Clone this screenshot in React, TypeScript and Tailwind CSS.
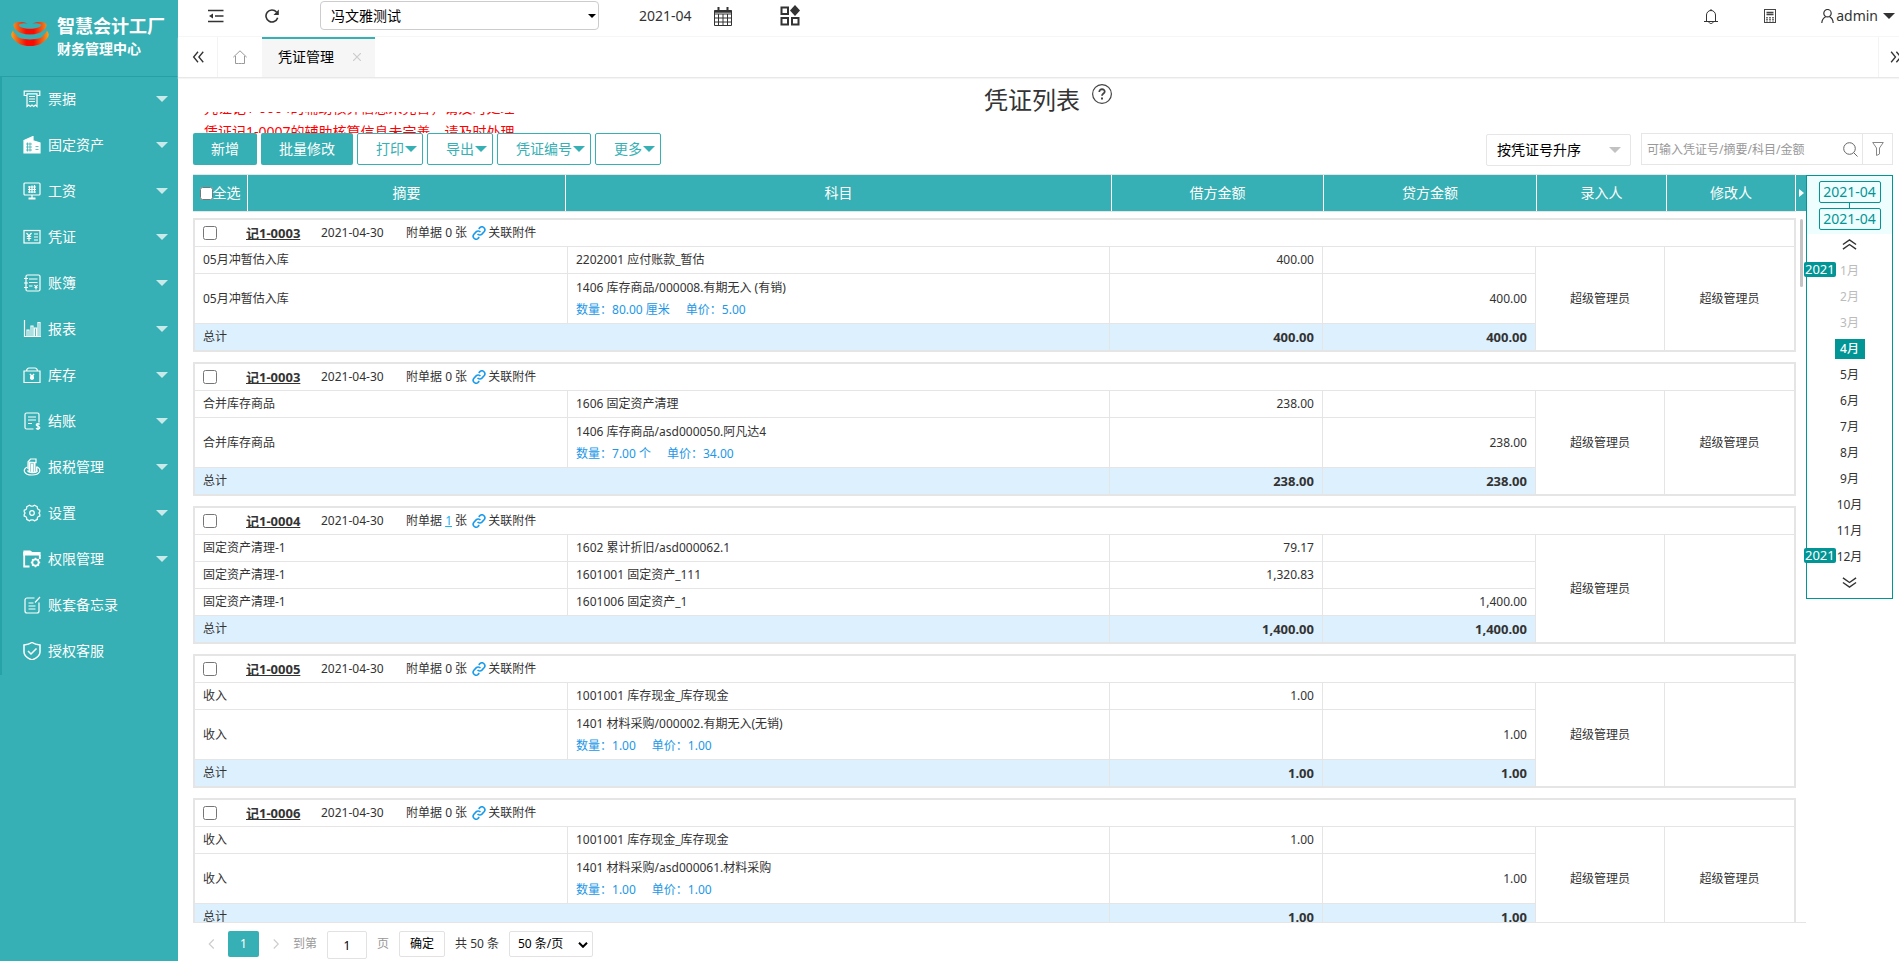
import type { ReactNode } from "react";

interface Entry {
  summary: string;
  subject: string;
  qty?: string;
  price?: string;
  debit?: string;
  credit?: string;
}

interface Voucher {
  id: number;
  code: string;
  date: string;
  attachments: number;
  entries: Entry[];
  total: string;
  creator: string;
  modifier?: string;
}

const vouchers: Voucher[] = [
  {
    id: 1,
    code: "记1-0003",
    date: "2021-04-30",
    attachments: 0,
    entries: [
      { summary: "05月冲暂估入库", subject: "2202001 应付账款_暂估", debit: "400.00" },
      { summary: "05月冲暂估入库", subject: "1406 库存商品/000008.有期无入 (有销)", qty: "80.00 厘米", price: "5.00", credit: "400.00" },
    ],
    total: "400.00",
    creator: "超级管理员",
    modifier: "超级管理员",
  },
  {
    id: 2,
    code: "记1-0003",
    date: "2021-04-30",
    attachments: 0,
    entries: [
      { summary: "合并库存商品", subject: "1606 固定资产清理", debit: "238.00" },
      { summary: "合并库存商品", subject: "1406 库存商品/asd000050.阿凡达4", qty: "7.00 个", price: "34.00", credit: "238.00" },
    ],
    total: "238.00",
    creator: "超级管理员",
    modifier: "超级管理员",
  },
  {
    id: 3,
    code: "记1-0004",
    date: "2021-04-30",
    attachments: 1,
    entries: [
      { summary: "固定资产清理-1", subject: "1602 累计折旧/asd000062.1", debit: "79.17" },
      { summary: "固定资产清理-1", subject: "1601001 固定资产_111", debit: "1,320.83" },
      { summary: "固定资产清理-1", subject: "1601006 固定资产_1", credit: "1,400.00" },
    ],
    total: "1,400.00",
    creator: "超级管理员",
  },
  {
    id: 4,
    code: "记1-0005",
    date: "2021-04-30",
    attachments: 0,
    entries: [
      { summary: "收入", subject: "1001001 库存现金_库存现金", debit: "1.00" },
      { summary: "收入", subject: "1401 材料采购/000002.有期无入(无销)", qty: "1.00", price: "1.00", credit: "1.00" },
    ],
    total: "1.00",
    creator: "超级管理员",
  },
  {
    id: 5,
    code: "记1-0006",
    date: "2021-04-30",
    attachments: 0,
    entries: [
      { summary: "收入", subject: "1001001 库存现金_库存现金", debit: "1.00" },
      { summary: "收入", subject: "1401 材料采购/asd000061.材料采购", qty: "1.00", price: "1.00", credit: "1.00" },
    ],
    total: "1.00",
    creator: "超级管理员",
    modifier: "超级管理员",
  },
];

const yen = "M7 8l2 2.500 2-2.500M9 10.500V14M7 11h4M7 12.500h4";

const menu: { label: string; icon: ReactNode; leaf?: boolean }[] = [
  {
    label: "票据",
    icon: <path d="M4 5.500H1.200V1.200h15.600v4.300H14M4 3.800v12.700l1.700-1.500 1.700 1.500L9 15l1.700 1.500 1.600-1.500 1.700 1.500V3.800zM6 6.500h6M6 9h6M6 11.500h6" />,
  },
  {
    label: "固定资产",
    icon: (
      <>
        <path fill="currentColor" d="M1 4.500 10 .5V17H1zM11 5l6 2v10h-6z" />
        <path stroke="#36b0b4" d="M3 8h6M3 11h6M3 14h6M4.500 6.500v9M7 6.500v9M12.500 10.500h3M12.500 13.500h3" strokeWidth="0.8" />
      </>
    ),
  },
  {
    label: "工资",
    icon: (
      <>
        <rect x="1" y="1" width="16" height="12" rx="1" />
        <path d="M5 5h8M5 7.500h8M5 10h8M6.500 4v7M9 3.500v7.500M11.500 3v8M9 13v3" />
        <path d="M5.500 16.500h7" strokeWidth="2" />
      </>
    ),
  },
  {
    label: "凭证",
    icon: (
      <>
        <rect x="1" y="2.500" width="16" height="12.500" />
        <path d="M3.500 5l2.500 3 2.500-3M6 8v5M3.800 8.500h4.400M3.800 10.500h4.400M11 6h4M11 9h4M11 12h4" />
      </>
    ),
  },
  {
    label: "账簿",
    icon: (
      <>
        <rect x="3" y="1" width="14" height="16" rx="1.500" />
        <path d="M1 4.500h4M1 9h4M1 13.500h4M6 5h8.500M6 8.500h8.500M6 12h3.500M11.500 11l1.500 2 1.500-2M13 13v2.500M11.500 13.500h3" />
      </>
    ),
  },
  {
    label: "报表",
    icon: <path d="M1.500 0v16.500H18M4 16V10h2v6M8 16V6h2v10M11.500 16V8h2v8M15 16V2.500h2V16" />,
  },
  {
    label: "库存",
    icon: (
      <>
        <path d="M1 5h16v11.500H1zM3.500 4.500C4 2.500 5 2 6 2h6c1 0 2 .5 2.500 2.500" />
        <path d={yen} strokeWidth="1.400" />
      </>
    ),
  },
  {
    label: "结账",
    icon: (
      <>
        <path d="M10.500 17H3.500a1.500 1.500 0 0 1-1.500-1.500v-13A1.500 1.500 0 0 1 3.500 1h11A1.500 1.500 0 0 1 16 2.500v8M5 5h8M5 8h8M5 11.500h4" />
        <path d="M16.800 12.400c-1.600-1.400-4.300-.4-3.300 1 .8 1 3.200.8 3.300 2.300 0 1.500-2.500 1.700-3.800.5M15 11v7" />
      </>
    ),
  },
  {
    label: "报税管理",
    icon: (
      <>
        <path fill="currentColor" stroke="none" d="M5.500 4h2v10h-2zM8 5.500h2V15H8zM10.500 4h2v10h-2zM13 8.500h1.500V13H13z" />
        <path d="M5 4l2.500-3h5.500v3.500zM5 5v6" />
        <path d="M4.500 9C-1 11 .5 17 9 17s10-6 5-8M4.500 12.500c1 2.700 8 2.900 10 .5" />
      </>
    ),
  },
  {
    label: "设置",
    icon: (
      <>
        <path strokeLinejoin="round" d="M6.500 1.200C7.500 2.600 10.500 2.600 11.500 1.200l2.800 1.500c-.4 1.800.7 3.200 2.500 3.300v2c-1.200.7-1.200 1.400 0 2.200v2c-1.800 0-2.900 1.400-2.500 3.200l-2.800 1.500c-1-1.500-4-1.500-5 0l-2.800-1.500c.4-1.800-.7-3.200-2.500-3.200v-2c1.200-.8 1.200-1.500 0-2.200V6c1.800 0 2.900-1.500 2.500-3.300z" />
        <circle cx="9" cy="9" r="2.300" />
      </>
    ),
  },
  {
    label: "权限管理",
    icon: (
      <>
        <path d="M6.500 16.500H1.200V2M16.800 9V5" strokeWidth="1.800" />
        <path fill="currentColor" d="M1 1h6l2 1.500h8v2.500H1z" />
        <circle cx="12.500" cy="12.500" r="3.200" strokeWidth="1.800" />
        <path d="M12.500 7.800v1.400M12.500 15.800v1.400M7.800 12.500h1.400M15.800 12.500h1.400M9.200 9.200l1 1M14.800 14.800l1 1M15.800 9.200l-1 1M10.200 14.800l-1 1" strokeWidth="1.600" />
      </>
    ),
  },
  {
    label: "账套备忘录",
    leaf: true,
    icon: <path d="M11.500 2H4a2 2 0 0 0-2 2v11a2 2 0 0 0 2 2h10a2 2 0 0 0 2-2V6.500M5.500 7h5M5.500 10h7M5.500 13h7M12 6.500 17 1" />,
  },
  {
    label: "授权客服",
    leaf: true,
    icon: <path d="M9 0.500c2.500 1.700 5 2.300 8 2.500v7c0 4-4 6.500-8 8-4-1.500-8-4-8-8V3c3-.2 5.500-.8 8-2.500zM5 9l3 3 5.500-5.500" strokeWidth="1.500" />,
  },
];

const months = ["1月", "2月", "3月", "4月", "5月", "6月", "7月", "8月", "9月", "10月", "11月", "12月"];

function Caret({ className }: { className: string }) {
  return (
    <svg viewBox="0 0 12 6" className={`shrink-0 ${className}`} fill="currentColor" aria-hidden="true">
      <path d="M0 0h12L6 6z" />
    </svg>
  );
}

function Chevrons({ d, className }: { d: string; className: string }) {
  return (
    <svg viewBox="0 0 16 16" className={`shrink-0 ${className}`} fill="none" stroke="currentColor" strokeWidth="1.500" aria-hidden="true">
      <path d={d} />
    </svg>
  );
}

function LinkIcon() {
  return (
    <svg viewBox="0 0 24 24" className="h-[14px] w-[14px] shrink-0" fill="none" stroke="#1b9cea" strokeWidth="2.800" aria-hidden="true">
      <path d="M9.500 13.500a5 5 0 0 0 7.500.5l4-4.500a5 5 0 0 0-7-7l-2.500 2.500" />
      <path d="M14.500 10.500a5 5 0 0 0-7.500-.5l-4 4.500a5 5 0 0 0 7 7l2.500-2.500" />
    </svg>
  );
}

function Sidebar() {
  return (
    <aside className="w-[178px] shrink-0 bg-[#36b0b4] text-white">
      <div className="flex h-[77px] items-start gap-2 pl-[11px] pt-[14px]">
        <svg viewBox="0 0 38 26" className="mt-[7px] h-[26px] w-[38px] shrink-0" aria-hidden="true">
          <defs>
            <linearGradient id="flame" gradientUnits="userSpaceOnUse" x1="0" y1="0" x2="38" y2="0">
              <stop offset="0" stopColor="#f9a51a" />
              <stop offset="0.15" stopColor="#ee6a1a" />
              <stop offset="0.4" stopColor="#f80d05" />
              <stop offset="0.6" stopColor="#f80d05" />
              <stop offset="0.85" stopColor="#ee6a1a" />
              <stop offset="1" stopColor="#f9a51a" />
            </linearGradient>
          </defs>
          <path fill="url(#flame)" d="M17 2.500C13 .5 5 .3 3 2.500c-2 3 2 7.500 7 9.500 6 2 12 2 18 0 5-2 9-6.500 7-9.500-2-2.200-10-2-14 0 4-.5 8 0 9 1.300 1.200 2-5 4-11 4s-12.200-2-11-4c1-1.300 5-1.800 9-1.300z" />
          <path fill="url(#flame)" d="M2 9.500c-2 3-2.500 5 0 8C6 22.500 11 25 19 25s13-2.500 17-7.500c2.500-3 2-5 0-8-1 2-1.500 3-3.500 4 .5 3-6 5-13.500 5S5 16.500 5.500 13.500C3.500 12.500 3 11.500 2 9.500z" />
        </svg>
        <div className="font-bold">
          <div className="text-[18px] leading-6">智慧会计工厂</div>
          <div className="text-sm leading-[22px]">财务管理中心</div>
        </div>
      </div>
      <nav className="border-l-2 border-[#25a3a6] shadow-[0_-1px_0_#2a9fa2]">
        {menu.map((item) => (
          <button key={item.label} type="button" className="flex h-[46px] w-full items-center pb-[2px] pl-[21px] pr-[10px] text-sm">
            <svg viewBox="0 0 18 18" className="mr-[7px] h-[18px] w-[18px] shrink-0" fill="none" stroke="currentColor" strokeWidth="1.200" aria-hidden="true">
              {item.icon}
            </svg>
            <span className="flex-1 text-left">{item.label}</span>
            {!item.leaf && <Caret className="h-[6px] w-3 text-[#c9eaea]" />}
          </button>
        ))}
      </nav>
    </aside>
  );
}

function TopBar() {
  return (
    <header className="flex h-[37px] items-center border-b border-[#f6f6f6] pb-2 pl-[30px] pr-1 text-sm text-[#333]">
      <button type="button" aria-label="收起菜单" className="mr-[41px] mt-[3px]">
        <svg viewBox="0 0 16 14" className="h-[14px] w-4" fill="none" stroke="#333" strokeWidth="1.600">
          <path d="M0 1.500h15.500M7 7h8.500M0 12.500h15.500" />
          <path d="M5 4.500v5L1 7z" fill="#333" stroke="none" />
        </svg>
      </button>
      <button type="button" aria-label="刷新" className="mr-[41px] mt-[3px]">
        <svg viewBox="0 0 14 14" className="h-[14px] w-[14px]" fill="none" stroke="#333" strokeWidth="1.600">
          <path d="M12.700 8.800A6 6 0 1 1 11.500 3" />
          <path d="M13.800.5V6H8.500z" fill="#333" stroke="none" />
        </svg>
      </button>
      <div className="relative mt-[3px] w-[279px]">
        <select aria-label="账套" defaultValue="a" className="h-[29px] w-full appearance-none rounded border border-[#ccc] bg-white px-[10px] text-sm text-black">
          <option value="a">冯文雅测试</option>
        </select>
        <Caret className="pointer-events-none absolute right-[3px] top-[13px] h-1 w-2 text-black" />
      </div>
      <span className="ml-[40px] mt-1 w-[75px] text-sm">2021-04</span>
      <button type="button" aria-label="选择期间" className="mr-[48px] mt-1">
        <svg viewBox="0 0 18 19" className="h-[19px] w-[18px]" fill="none" stroke="#333">
          <path d="M.5 3.500h17v15H.5zM.5 7h17M.5 11h17M.5 15h17M4.500 7v11.500M9 7v11.500M13.500 7v11.500" />
          <path d="M.5 4.500h17" strokeWidth="2.500" />
          <path d="M4.500 0v5M13.500 0v5" strokeWidth="2" />
        </svg>
      </button>
      <button type="button" aria-label="应用" className="mt-[3px]">
        <svg viewBox="0 0 20 21" className="h-[21px] w-5" fill="none" stroke="#333" strokeWidth="2">
          <path d="M1.500 2.500h6.500V9H1.500zM1.500 13H8v6.500H1.500zM12 13h6.500v6.500H12z" />
          <path d="M15 0l5 5.500-5 5.500-5-5.500z" fill="#333" stroke="none" />
        </svg>
      </button>
      <div className="ml-auto mt-1 flex items-center">
        <button type="button" aria-label="通知" className="mr-[46px]">
          <svg viewBox="0 0 14 15" className="h-[15px] w-[14px]" fill="none" stroke="#333">
            <path d="M2.500 12V6a4.500 4.500 0 0 1 9 0v6M0 12.500h14M5 13c0 2 4 2 4 0M6 1.500C6 .5 8 .5 8 1.500" />
          </svg>
        </button>
        <button type="button" aria-label="计算器" className="mr-[45px]">
          <svg viewBox="0 0 12 14" className="h-[14px] w-3" fill="none" stroke="#444">
            <rect x="0.5" y="0.500" width="11" height="13" />
            <path d="M2.500 3.500h7M2.500 5.500h7" strokeWidth="1.300" />
            <path d="M3 8v4.500M6 8v4.500M9 8v4.500" strokeWidth="1.500" strokeDasharray="1.200 .6" />
          </svg>
        </button>
        <button type="button" className="flex items-center text-sm">
          <svg viewBox="0 0 13 14" className="mr-[2px] h-[14px] w-[13px]" fill="none" stroke="#333" strokeWidth="1.200">
            <circle cx="6.500" cy="4.200" r="3.700" />
            <path d="M.8 14c.2-3 1.500-5 3.800-6.200M8.600 7.800c2.300 1.200 3.400 3.200 3.600 6.200" />
          </svg>
          admin
          <Caret className="ml-[5px] h-[6px] w-3" />
        </button>
      </div>
    </header>
  );
}

function TabBar() {
  return (
    <div className="flex h-[41px] border-b border-[#e8e8e8] text-sm shadow-[0_1px_1px_#f5f5f5]">
      <button type="button" aria-label="向左滚动" className="flex w-10 items-center justify-center border-r border-[#f3f3f3] text-[#333]">
        <Chevrons d="M8 2 3 8l5 6M14 2 9 8l5 6" className="h-[14px] w-[14px]" />
      </button>
      <button type="button" aria-label="首页" className="flex w-11 items-center justify-center">
        <svg viewBox="0 0 14 14" className="h-[14px] w-[14px]" fill="none" stroke="#999">
          <path d="M.3 7.200 7 .8l6.700 6.400M2.500 6v7.500h3M11.500 6v7.500h-3M5.500 13.500h3" />
        </svg>
      </button>
      <div className="flex w-[113px] items-center border-t-2 border-[#36b0b4] bg-[#f6f6f6] pb-[2px] pl-4 text-black">
        <span className="w-[75px]">凭证管理</span>
        <button type="button" aria-label="关闭">
          <svg viewBox="0 0 8 8" className="h-2 w-2" fill="none" stroke="#ccc" strokeWidth="1.200">
            <path d="M0 0l8 8M8 0 0 8" />
          </svg>
        </button>
      </div>
      <button type="button" aria-label="向右滚动" className="ml-auto flex w-[21px] items-center justify-end overflow-hidden border-l border-[#f3f3f3] text-[#333]">
        <Chevrons d="M7 2l5 6-5 6M13 2l5 6-5 6" className="h-[14px] w-[14px]" />
      </button>
    </div>
  );
}

function MenuButton({ children }: { children: ReactNode }) {
  return (
    <button type="button" className="flex h-8 items-center gap-px rounded-xs border border-[#36b0b4] bg-white pl-[18px] pr-[5px] text-sm text-[#36b0b4]">
      {children}
      <Caret className="h-[6px] w-3" />
    </button>
  );
}

function Toolbar() {
  return (
    <div className="flex items-start justify-between">
      <div className="flex gap-1">
        <button type="button" className="h-8 rounded-xs bg-[#36b0b4] px-[18px] text-sm text-white">新增</button>
        <button type="button" className="h-8 rounded-xs bg-[#36b0b4] px-[18px] text-sm text-white">批量修改</button>
        <MenuButton>打印</MenuButton>
        <MenuButton>导出</MenuButton>
        <MenuButton>凭证编号</MenuButton>
        <MenuButton>更多</MenuButton>
      </div>
      <div className="flex gap-[10px]">
        <div className="relative mt-px w-[145px]">
          <select aria-label="排序" defaultValue="asc" className="h-8 w-full appearance-none rounded-xs border border-[#e6e6e6] bg-white px-[10px] text-sm text-black">
            <option value="asc">按凭证号升序</option>
          </select>
          <Caret className="pointer-events-none absolute right-[10px] top-[13px] h-[6px] w-3 text-[#c2c2c2]" />
        </div>
        <div className="flex h-8 w-[252px] items-center border border-[#e6e6e6]">
          <input aria-label="搜索" placeholder="可输入凭证号/摘要/科目/金额" className="h-full min-w-0 flex-1 pl-[5px] text-xs outline-none placeholder:text-[#999]" />
          <button type="button" aria-label="查询" className="mr-1">
            <svg viewBox="0 0 15 15" className="h-[15px] w-[15px]" fill="none" stroke="#666">
              <circle cx="6.500" cy="6.500" r="5.800" />
              <path d="M10.800 10.800 14.500 14.500" />
            </svg>
          </button>
          <button type="button" aria-label="筛选" className="flex h-full w-[30px] items-center justify-center border-l border-[#e6e6e6]">
            <svg viewBox="0 0 12 14" className="h-[14px] w-3" fill="none" stroke="#888">
              <path d="M.7.5h10.600L7.500 6v6l-3 1.500V6z" />
            </svg>
          </button>
        </div>
      </div>
    </div>
  );
}

function HeadTable() {
  const th = "border-r border-white text-sm font-normal";
  return (
    <table className="w-full table-fixed border-separate border-spacing-0 border-y border-[#e5e5e5] bg-[#36b0b4] text-white">
      <thead>
        <tr className="h-9">
          <th className={`${th} w-[55px]`}>
            <label className="flex items-center justify-center">
              <input type="checkbox" className="h-[13px] w-[13px]" />
              全选
            </label>
          </th>
          <th className={`${th} w-[318px]`}>摘要</th>
          <th className={th}>科目</th>
          <th className={`${th} w-[212px]`}>借方金额</th>
          <th className={`${th} w-[213px]`}>贷方金额</th>
          <th className={`${th} w-[130px]`}>录入人</th>
          <th className={`${th} w-[129px]`}>修改人</th>
        </tr>
      </thead>
    </table>
  );
}

function VoucherTable({ voucher }: { voucher: Voucher }) {
  const line = "border-b border-r border-[#e5e5e5] px-2";
  const span = voucher.entries.length + 1;

  return (
    <table className="mb-[10px] w-full table-fixed border-separate border-spacing-0 border-2 border-[#e5e5e5] text-xs text-[#333]">
      <colgroup>
        <col className="w-[373px]" />
        <col />
        <col className="w-[213px]" />
        <col className="w-[213px]" />
        <col className="w-[129px]" />
        <col className="w-[129px]" />
      </colgroup>
      <tbody>
        <tr className="h-[27px]">
          <td colSpan={6} className="border-b border-[#e5e5e5] px-2">
            <div className="flex items-center">
              <input type="checkbox" aria-label={voucher.code} className="mr-[29px] h-[14px] w-[14px]" />
              <a href="#" className="w-[75px] text-[13px] leading-5 font-bold underline">{voucher.code}</a>
              <span className="w-[85px]">{voucher.date}</span>
              <span className="mr-[5px]">
                附单据 {voucher.attachments > 0 ? <a href="#" className="text-[#1bb0ee] underline">{voucher.attachments}</a> : 0} 张
              </span>
              <button type="button" className="flex items-center gap-[2px]">
                <LinkIcon />
                关联附件
              </button>
            </div>
          </td>
        </tr>
        {voucher.entries.map((entry, i) => (
          <tr key={i} className={entry.qty ? "h-[50px]" : "h-[27px]"}>
            <td className={line}>{entry.summary}</td>
            <td className={line}>
              <div className={entry.qty ? "leading-[22px]" : ""}>{entry.subject}</div>
              {entry.qty && (
                <div className="flex gap-4 leading-[22px] text-[#2297e6]">
                  <span>数量：{entry.qty}</span>
                  <span>单价：{entry.price}</span>
                </div>
              )}
            </td>
            <td className={`${line} text-right`}>{entry.debit}</td>
            <td className={`${line} text-right`}>{entry.credit}</td>
            {i === 0 && (
              <>
                <td rowSpan={span} className="border-r border-[#e5e5e5] text-center">{voucher.creator}</td>
                <td rowSpan={span} className="text-center">{voucher.modifier}</td>
              </>
            )}
          </tr>
        ))}
        <tr className="h-[26px] bg-[#ddf0fe]">
          <td colSpan={2} className="border-r border-[#e5e5e5] px-2">总计</td>
          <td className="border-r border-[#e5e5e5] px-2 text-right text-[13px] leading-5 font-bold">{voucher.total}</td>
          <td className="border-r border-[#e5e5e5] px-2 text-right text-[13px] leading-5 font-bold">{voucher.total}</td>
        </tr>
      </tbody>
    </table>
  );
}

function YearBadge() {
  return <span className="absolute -left-[3px] top-1 rounded-xs bg-[#019596] px-px text-[13px] leading-[15px] text-white">2021</span>;
}

function PeriodPanel() {
  return (
    <div className="mt-px w-[87px] shrink-0 self-start border border-[#019596] text-xs text-[#333]">
      <div className="flex flex-col items-center bg-[#eefefe] pb-1 pt-[5px] text-sm text-[#019596]">
        <button type="button" className="h-[22px] w-[62px] rounded-xs border border-[#019596] leading-5">2021-04</button>
        <span className="h-[5px] w-px bg-[#019596]" />
        <button type="button" className="h-[22px] w-[62px] rounded-xs border border-[#019596] leading-5">2021-04</button>
      </div>
      <button type="button" aria-label="上一年" className="flex h-6 w-full items-center justify-center pb-1">
        <Chevrons d="M1 8l7-5 7 5M1 13l7-5 7 5" className="h-[15px] w-[15px]" />
      </button>
      <ul>
        {months.map((month, i) => (
          <li key={month} className="relative flex h-[26px] items-center justify-center">
            {(i === 0 || i === 11) && <YearBadge />}
            <button
              type="button"
              className={i === 3 ? "h-5 w-[30px] bg-[#019596] font-medium text-white" : i < 3 ? "h-5 w-[30px] text-[#bbb]" : "h-5 w-[30px]"}
            >
              {month}
            </button>
          </li>
        ))}
      </ul>
      <button type="button" aria-label="下一年" className="flex h-7 w-full items-center justify-center pb-1">
        <Chevrons d="M1 3l7 5 7-5M1 8l7 5 7-5" className="h-[15px] w-[15px]" />
      </button>
    </div>
  );
}

function Pagination() {
  return (
    <div className="flex h-[38px] items-start pl-[14px] pt-2 text-xs leading-[26px] text-[#333]">
      <button type="button" aria-label="上一页" className="flex h-[26px] w-[21px] items-center text-[#ccc]">
        <Chevrons d="M9 2 3 8l6 6" className="h-3 w-3" />
      </button>
      <button type="button" className="h-[26px] w-[31px] rounded-xs bg-[#36b0b4] text-white">1</button>
      <button type="button" aria-label="下一页" className="flex h-[26px] w-[34px] items-center justify-center text-[#ccc]">
        <Chevrons d="M5 2l6 6-6 6" className="h-3 w-3" />
      </button>
      <label className="flex gap-[10px] text-[#999]">
        到第
        <input defaultValue="1" className="h-7 w-10 rounded-xs border border-[#e2e2e2] text-center text-black" />
        页
      </label>
      <button type="button" className="ml-[10px] h-[26px] w-[46px] rounded-xs border border-[#e2e2e2] leading-6 text-black">确定</button>
      <span className="mx-[10px]">共 50 条</span>
      <div className="relative">
        <select aria-label="每页条数" defaultValue="50" className="h-[26px] w-[84px] appearance-none rounded-xs border border-[#e2e2e2] bg-white pl-2 text-xs text-black">
          <option value="50">50 条/页</option>
        </select>
        <svg viewBox="0 0 10 6" className="pointer-events-none absolute right-[5px] top-[11px] h-[6px] w-[10px]" fill="none" stroke="#000" strokeWidth="2">
          <path d="M1 .8 5 4.800 9 .8" />
        </svg>
      </div>
    </div>
  );
}

export default function App() {
  return (
    <div className="flex h-screen overflow-hidden bg-white font-['Noto_Sans','Noto_Sans_CJK_SC',sans-serif]">
      <Sidebar />
      <div className="flex min-w-0 flex-1 flex-col">
        <TopBar />
        <TabBar />
        <main className="flex min-h-0 flex-1 flex-col pl-[15px] pr-[6px]">
          <div className="flex h-[34px] items-start justify-center gap-3 pl-[10px]">
            <h1 className="mt-[6px] text-2xl leading-8 text-[#333]">凭证列表</h1>
            <button type="button" aria-label="帮助" className="mt-[6px]">
              <svg viewBox="0 0 20 20" className="h-5 w-5" fill="none" stroke="#444">
                <circle cx="10" cy="10" r="9.400" strokeWidth="1.200" />
                <path d="M7.300 8c0-3.800 5.600-3.400 5.400-.3-.1 1.700-2.700 1.900-2.700 4" strokeWidth="1.800" />
                <path d="M10 13.500v2" strokeWidth="2" />
              </svg>
            </button>
          </div>
          <div className="h-[21px] shrink-0 overflow-hidden pl-[11px] text-sm leading-6 text-[#f00]">
            <div className="-mt-4">
              <p>凭证记1-0004的辅助核算信息未完善，请及时处理</p>
              <p>凭证记1-0007的辅助核算信息未完善，请及时处理</p>
            </div>
          </div>
          <Toolbar />
          <div className="mt-2 flex min-h-0 flex-1">
            <div className="flex min-w-0 flex-1 flex-col">
              <HeadTable />
              <div className="mt-[6px] min-h-0 flex-1 overflow-hidden border-b border-[#e5e5e5]">
                {vouchers.map((voucher) => (
                  <VoucherTable key={voucher.id} voucher={voucher} />
                ))}
              </div>
            </div>
            <div className="flex w-[10px] shrink-0 flex-col items-center border-b border-[#e5e5e5]">
              <button type="button" aria-label="收起期间" className="mt-px flex h-9 w-full items-center justify-center bg-[#36b0b4] text-white">
                <svg viewBox="0 0 5 8" className="h-2 w-[5px]" fill="currentColor">
                  <path d="M0 0l5 4-5 4z" />
                </svg>
              </button>
              <div className="mt-2 h-[68px] w-[3px] rounded-full bg-[#c4c4c4]" />
            </div>
            <PeriodPanel />
          </div>
          <Pagination />
        </main>
      </div>
    </div>
  );
}
